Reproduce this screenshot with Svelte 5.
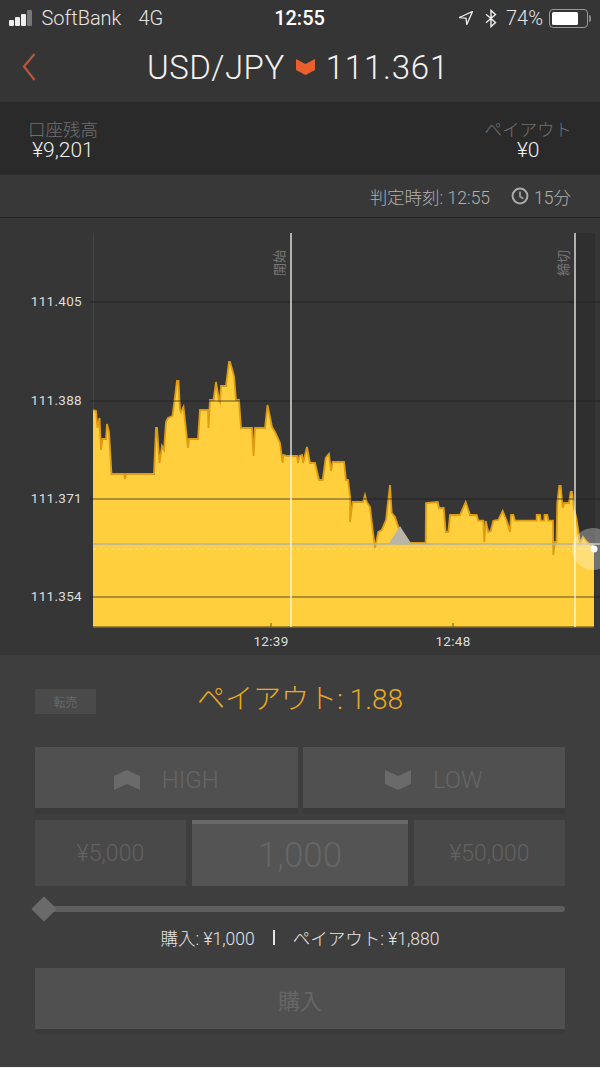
<script lang="ts">
  // price series, page-space coordinates traced from the chart
  const series = [
    [93,410],[96,411],[97.5,428],[99.5,418],[101,450],[102.5,439],[106,439],[107,424],[109,432],[111.5,474],
    [124,474],[125,479],[126,474],[154,474],[156,428],[157,428],[159.5,463],[162,446],[164,450],[166,422],
    [168,418],[172.5,416],[177,381],[178.5,381],[180,410],[181,412],[183.5,407],[187,439],[188,448],[189,439],
    [198,439],[200,410],[208,410],[208.5,428],[210,400],[213.5,400],[216,382],[219,400],[220,402],[221,386],
    [226,386],[229,362],[230,362],[234,376],[236,400],[239,400],[241,428],[252,428],[253.5,456],[255,428],
    [265,428],[267.5,405],[272,427],[275,432],[280,443],[282.5,463],[283.5,455],[287,456],[297,456],[298,463],
    [299.5,456],[302,455],[303,463],[307,447],[310,463],[315,463],[319,480],[322.7,480],[325.7,458],[329,454],
    [331,471],[332.7,462],[344,462],[346,480],[348,480],[350.3,498],[350,522],[352.7,502],[363,502],[365,495],
    [366.7,502],[370,507],[372.7,530],[375,548],[378.3,532],[381.7,530],[386,520],[390,485],[391.7,513],[395,517],
    [398.3,527],[410,543],[425.7,543],[426,503],[437.7,502],[439,508],[443.7,508],[445.7,532],[448.3,532],[450,515],
    [460,515],[465.7,502],[470,515],[476.7,515],[478.3,520.7],[483.3,520.7],[484.3,542],[485.7,521],[488.3,532],[490.7,531],
    [493.3,520.7],[498.3,520],[502.7,511],[506.7,520.7],[510,532],[511,515],[513.3,515],[515,520.7],[536.7,520.7],[536.7,515],
    [540,515],[540.7,520.7],[544.3,520.7],[544.5,515],[547.3,515],[548.3,520.7],[553,520.7],[553.3,555],[555,542],[556.5,542],
    [557.3,503],[559.3,486],[560.7,486],[562.7,508],[564.3,503],[569,503],[570.7,492],[572,492],[574,508],[576.7,520],
    [580,543],[583,537],[586,541],[589,544],[594,545]
  ]
  const line = series.map((p) => p.join(',')).join(' ')
  const area = `${line} 594,627 93,627`

  const gridLines = [
    { y: 302, label: '111.405' },
    { y: 401, label: '111.388' },
    { y: 499, label: '111.371' },
    { y: 597, label: '111.354' }
  ]
  const ticks = [
    { x: 271, label: '12:39' },
    { x: 453, label: '12:48' }
  ]
</script>

<div class="screen">
  <header class="top">
    <div class="status">
      <div class="status-left">
        <span class="signal"><i></i><i></i><i></i><i class="off"></i></span>
        <span>SoftBank</span>
        <span class="net">4G</span>
      </div>
      <div class="clock">12:55</div>
      <div class="status-right">
        <svg class="loc" width="14" height="14" viewBox="0 0 14 14"><path d="M13.5 .5 L.5 6.5 L7 7.2 L7.8 13.5 Z" fill="none" stroke="#eee" stroke-width="1.3" stroke-linejoin="round"/></svg>
        <svg class="bt" width="12" height="19" viewBox="0 0 12 19"><path d="M1 5.2 L10.5 13.4 L6 17.6 L6 1.4 L10.5 5.6 L1 13.8" fill="none" stroke="#eee" stroke-width="1.4"/></svg>
        <span class="pct">74%</span>
        <span class="battery"><b></b></span>
      </div>
    </div>
    <div class="title">
      <svg class="back" width="14" height="28" viewBox="0 0 14 28"><path d="M12.5 1 L2 13.5 L12.5 27" fill="none" stroke="#b5583c" stroke-width="2.2"/></svg>
      <span class="pair">USD/JPY</span>
      <svg class="dir" width="19" height="16" viewBox="0 0 19 16"><path d="M0 0 L9.5 5 L19 0 V11 L9.5 16 L0 11 Z" fill="#e9602c"/></svg>
      <span class="rate">111.361</span>
    </div>
  </header>

  <section class="balance">
    <div class="bal">
      <div class="bal-label">口座残高</div>
      <div class="bal-value">¥9,201</div>
    </div>
    <div class="bal right">
      <div class="bal-label">ペイアウト</div>
      <div class="bal-value">¥0</div>
    </div>
  </section>

  <section class="expiry">
    <span>判定時刻: 12:55</span>
    <span class="dur">
      <svg width="18" height="18" viewBox="0 0 18 18"><circle cx="9" cy="9" r="7.4" fill="none" stroke="#aaa" stroke-width="2"/><path d="M9 4.5 V9.6 L12.4 11.6" fill="none" stroke="#aaa" stroke-width="1.6"/></svg>
      15分
    </span>
  </section>

  <svg class="chart" width="600" height="437" viewBox="0 218 600 437">
    <defs>
      <clipPath id="plot"><rect x="0" y="218" width="600" height="437"/></clipPath>
    </defs>
    <rect x="575" y="233" width="20" height="394" fill="#2f2f2f"/>
    <line x1="93.5" y1="233" x2="93.5" y2="410" stroke="#444"/>
    <polygon points={area} fill="#ffcf3e"/>
    <polyline points={line} fill="none" stroke="#dd9c14" stroke-width="1.8"/>
    <polygon points="400,526 389,543.5 411,543.5" fill="#b8b5a8"/>
    <line x1="93" y1="627" x2="594" y2="627" stroke="#8a6d1c" stroke-width="1.5"/>
    {#each gridLines as g}
      <line x1="90" y1={g.y} x2="600" y2={g.y} stroke="#1c1c1c" stroke-opacity="0.72" stroke-width="1.2"/>
      <text class="axis" x="82" y={g.y + 4} text-anchor="end">{g.label}</text>
    {/each}
    {#each ticks as t}
      <line x1={t.x} y1="623" x2={t.x} y2="627" stroke="#6a5518"/>
      <text class="axis" x={t.x} y="646" text-anchor="middle">{t.label}</text>
    {/each}
    <line x1="93" y1="544" x2="600" y2="544" stroke="#b4b1a6" stroke-width="1.6"/>
    <line x1="93" y1="549" x2="594" y2="549" stroke="#ffe9a6" stroke-dasharray="3 3"/>
    <line x1="291" y1="233" x2="291" y2="627" stroke="#f8f6ee" stroke-width="1.3"/>
    <line x1="575" y1="233" x2="575" y2="627" stroke="#f8f6ee" stroke-width="1.3"/>
    <text class="mark" transform="translate(284 263) rotate(-90)" text-anchor="middle">開始</text>
    <text class="mark" transform="translate(568 263) rotate(-90)" text-anchor="middle">締切</text>
    <g clip-path="url(#plot)">
      <circle cx="593" cy="549" r="21" fill="#fff" fill-opacity="0.3"/>
      <circle cx="594" cy="549" r="3.5" fill="#fff"/>
    </g>
  </svg>

  <section class="panel">
    <div class="payout-row">
      <button class="resell">転売</button>
      <div class="payout">ペイアウト: 1.88</div>
    </div>

    <div class="sides">
      <button class="side">
        <svg width="26" height="20" viewBox="0 0 26 20"><path d="M0 6 L13 0 L26 6 V20 L13 14 L0 20 Z" fill="#6a6a6a"/></svg>
        HIGH
      </button>
      <button class="side">
        <svg width="26" height="20" viewBox="0 0 26 20"><path d="M0 0 L13 6 L26 0 V14 L13 20 L0 14 Z" fill="#6a6a6a"/></svg>
        LOW
      </button>
    </div>

    <div class="amounts">
      <div class="preset">¥5,000</div>
      <div class="amount">1,000</div>
      <div class="preset">¥50,000</div>
    </div>

    <div class="slider"><span class="thumb"></span></div>

    <div class="summary">
      <span>購入: ¥1,000</span>
      <span class="sep"></span>
      <span>ペイアウト: ¥1,880</span>
    </div>

    <button class="buy">購入</button>
  </section>
</div>

<style>
  :global(body) {
    background: #f4f4f4;
  }

  .screen {
    width: 600px;
    height: 1067px;
    overflow: hidden;
    font-family: Roboto, 'Noto Sans CJK JP', sans-serif;
    color: #eee;
    background: #3e3e3e;
  }

  .top {
    height: 102px;
    background: #353535;
  }

  .status {
    height: 36px;
    display: grid;
    grid-template-columns: 1fr auto 1fr;
    align-items: center;
    padding: 0 10px 0 9px;
    font-size: 20px;
    font-weight: 300;
    color: #e6e6e6;
  }

  .status-left {
    display: flex;
    align-items: center;
    gap: 6px;
  }

  .net {
    margin-left: 11px;
  }

  .signal {
    display: flex;
    align-items: flex-end;
    gap: 1.5px;
    height: 16px;
    margin-right: 4px;
  }

  .signal i {
    width: 4.5px;
    height: 6px;
    background: #eee;
    border-radius: 1px;
  }

  .signal i:nth-child(2) {
    height: 9px;
  }

  .signal i:nth-child(3) {
    height: 12px;
  }

  .signal i:nth-child(4) {
    height: 16px;
  }

  .signal i.off {
    background: #777;
  }

  .clock {
    text-align: center;
    font-weight: 500;
    color: #fff;
  }

  .status-right {
    display: flex;
    align-items: center;
    justify-content: flex-end;
    gap: 6px;
  }

  .loc {
    margin-right: 6px;
  }

  .pct {
    margin-left: 3px;
  }

  .battery {
    position: relative;
    width: 39px;
    height: 19px;
    border: 1px solid #999;
    border-radius: 4px;
    padding: 2px;
    box-sizing: border-box;
    margin-right: 2px;
  }

  .battery b {
    display: block;
    width: 78%;
    height: 100%;
    background: #fff;
    border-radius: 1.5px;
  }

  .battery::after {
    content: '';
    position: absolute;
    right: -4px;
    top: 5px;
    width: 2px;
    height: 7px;
    background: #888;
    border-radius: 0 2px 2px 0;
  }

  .title {
    position: relative;
    height: 62px;
    box-sizing: border-box;
    display: flex;
    align-items: center;
    justify-content: center;
    gap: 11px;
    padding-right: 4px;
    font-size: 33px;
    font-weight: 300;
    color: #f2f2f2;
  }

  .back {
    position: absolute;
    left: 22px;
    top: 17px;
  }

  .pair {
    letter-spacing: 0.5px;
  }

  .rate {
    letter-spacing: 0.8px;
  }

  .balance {
    height: 73px;
    box-sizing: border-box;
    display: flex;
    justify-content: space-between;
    align-items: center;
    padding: 3px 28px 0 28px;
    background: #2a2a2a;
  }

  .bal {
    text-align: center;
  }

  .bal-label {
    line-height: 20px;
    font-size: 17.5px;
    color: #707070;
    font-weight: 300;
  }

  .bal-value {
    line-height: 21px;
    font-size: 21px;
    font-weight: 300;
    color: #eee;
  }

  .expiry {
    height: 42px;
    display: flex;
    justify-content: flex-end;
    align-items: center;
    gap: 21px;
    padding-right: 29px;
    background: #383838;
    font-size: 17.5px;
    font-weight: 300;
    color: #b0b0b0;
    border-bottom: 1px solid #222;
  }

  .dur {
    display: flex;
    align-items: center;
    gap: 5px;
  }

  .chart {
    display: block;
    background: #363636;
  }

  .axis {
    font-size: 13.5px;
    fill: #ddd;
    letter-spacing: 0.3px;
  }

  .mark {
    font-size: 13px;
    fill: #777;
  }

  .panel {
    display: flex;
    flex-direction: column;
    padding: 0 35px;
  }

  button {
    border: 0;
    font-family: inherit;
  }

  .payout-row {
    position: relative;
    height: 92px;
    box-sizing: border-box;
    padding-bottom: 8px;
    display: flex;
    align-items: center;
    justify-content: center;
  }

  .resell {
    position: absolute;
    left: 0;
    top: 34px;
    width: 61px;
    height: 25px;
    padding: 0;
    background: #4a4a4a;
    color: #686868;
    font-size: 12px;
  }

  .payout {
    font-size: 28px;
    font-weight: 300;
    color: #eaaa1e;
  }

  .sides {
    display: flex;
    gap: 5px;
  }

  .side {
    flex: 1;
    height: 61px;
    display: flex;
    align-items: center;
    justify-content: center;
    gap: 22px;
    padding: 4px 0 0 0;
    background: #505050;
    color: #666;
    font-size: 24px;
    font-weight: 300;
    box-shadow: 0 6px 0 #3a3a3a;
  }

  .amounts {
    display: flex;
    gap: 6px;
    margin-top: 12px;
    height: 66px;
  }

  .preset {
    width: 151px;
    display: flex;
    align-items: center;
    justify-content: center;
    background: #494949;
    color: #626262;
    font-size: 23px;
    font-weight: 300;
  }

  .amount {
    flex: 1;
    display: flex;
    align-items: center;
    justify-content: center;
    background: #545454;
    border-top: 4px solid #686868;
    box-sizing: border-box;
    color: #666;
    font-size: 35px;
    font-weight: 300;
  }

  .slider {
    position: relative;
    height: 6px;
    margin: 20px 0 0 9px;
    background: #5e5e5e;
    border-radius: 3px;
  }

  .thumb {
    position: absolute;
    left: -9px;
    top: -6px;
    width: 18px;
    height: 18px;
    transform: rotate(45deg);
    transform-origin: center;
    background: #6a6a6a;
    border-radius: 1px;
  }

  .summary {
    display: flex;
    justify-content: center;
    align-items: center;
    gap: 18px;
    height: 22px;
    margin-top: 14px;
    font-size: 17.5px;
    font-weight: 300;
    color: #e4e4e4;
  }

  .sep {
    width: 2px;
    height: 15px;
    background: #e4e4e4;
  }

  .buy {
    height: 61px;
    margin-top: 20px;
    background: #505050;
    color: #666;
    font-size: 22px;
    padding-top: 1px;
    box-shadow: 0 5px 0 #3a3a3a;
  }
</style>
